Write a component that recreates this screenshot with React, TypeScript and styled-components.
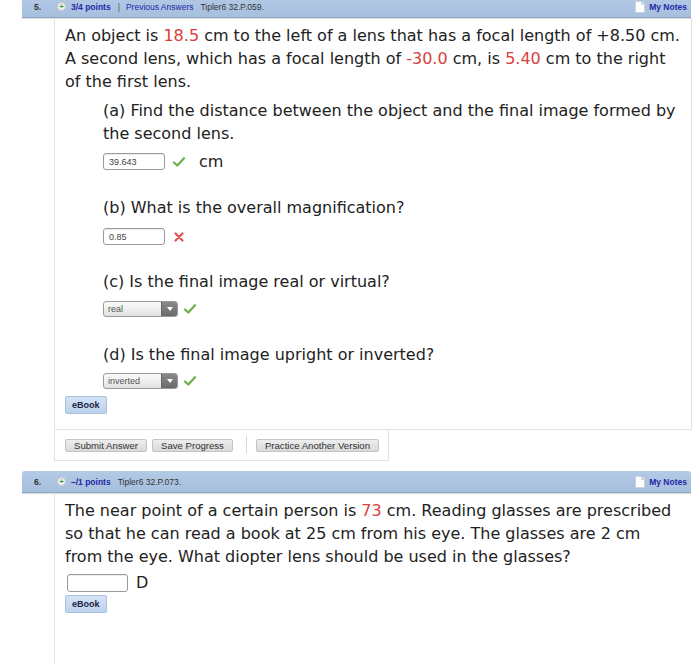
import { createGlobalStyle } from "styled-components";
import styled from "styled-components";

const GlobalStyle = createGlobalStyle`
    body
    {
        margin: 0;
        background: #ffffff;
        font-family: "DejaVu Sans", Verdana, sans-serif;
    }
`;

const Page = styled.div`
    width: 700px;
    margin-top: -4px;
`;

const Header = styled.div`
    display: flex;
    align-items: center;
    height: 21px;
    margin: 0 9px 0 22px;
    padding: 0 4px 0 12px;

    font-family: "Liberation Sans", Arial, sans-serif;
    font-size: 8.5px;
    color: #333333;

    background: linear-gradient(#b3cae6, #a6bfdd);
    border-bottom: 1px solid #8ea7c7;
    border-radius: 3px 3px 0 0;
    box-shadow: 0 1px 1px rgba(0, 0, 0, 0.15);
`;

const Number = styled.span`
    width: 23px;
    font-weight: 700;
`;

const PlusIcon = styled.span`
    display: inline-flex;
    align-items: center;
    justify-content: center;
    width: 7px;
    height: 7px;
    margin-right: 5px;

    border-radius: 50%;
    background: #f2f2f2;
    border: 1px solid #c8c8c8;
    color: #3aa03a;
    font-size: 8px;
    font-weight: 700;
    line-height: 7px;
`;

const Points = styled.span`
    color: #2626a8;
    font-weight: 700;
    margin-right: 7px;
`;

const Link = styled.span`
    color: #2626a8;
    margin-right: 7px;
`;

const Pipe = styled.span`
    color: #555555;
    margin-right: 6px;
`;

const NotesLink = styled.span`
    display: flex;
    align-items: center;
    gap: 4px;
    margin-left: auto;

    color: #2626a8;
    font-weight: 700;
`;

const Body = styled.div<{ framed? : boolean }>`
    margin-left: 54px;
    margin-right: ${props => props.framed ? "8px" : "0"};
    padding: 6px 10px 0 10px;

    border-left: 1px solid #e2e2e2;
    border-right: ${props => props.framed ? "1px solid #e2e2e2" : "none"};
    border-bottom: ${props => props.framed ? "1px solid #e2e2e2" : "none"};
`;

const Text = styled.p`
    margin: 0;
    font-size: 16px;
    line-height: 23px;
    color: #222222;
`;

const Red = styled.span`
    color: #d8413c;
`;

const Part = styled.div`
    margin-left: 38px;
`;

const AnswerRow = styled.div<{ top : number, bottom : number }>`
    display: flex;
    align-items: center;
    margin-top: ${props => props.top}px;
    margin-bottom: ${props => props.bottom}px;
`;

const Input = styled.div<{ w : number, h : number }>`
    box-sizing: border-box;
    width: ${props => props.w}px;
    height: ${props => props.h}px;
    padding: 0 5px;
    display: flex;
    align-items: center;

    border: 1px solid #9a9a9a;
    border-radius: 3px;
    background: #ffffff;
    box-shadow: inset 0 1px 1px rgba(0, 0, 0, 0.08);

    font-family: "Liberation Sans", Arial, sans-serif;
    font-size: 9px;
    color: #444444;
`;

const Select = styled.div`
    box-sizing: border-box;
    display: flex;
    width: 75px;
    height: 16px;

    border: 1px solid #9a9a9a;
    border-radius: 3px;
    overflow: hidden;
    background: linear-gradient(#fbfbfb, #e2e2e2);

    font-family: "Liberation Sans", Arial, sans-serif;
    font-size: 9px;
    color: #555555;
`;

const SelectText = styled.span`
    flex: 1;
    padding-left: 4px;
    line-height: 14px;
`;

const SelectArrow = styled.span`
    display: flex;
    align-items: center;
    justify-content: center;
    width: 15px;
    background: linear-gradient(#8a8a8a, #6a6a6a);
    border-left: 1px solid #666666;
`;

const Mark = styled.span<{ gap : number }>`
    display: flex;
    margin-left: ${props => props.gap}px;
`;

const Unit = styled.span<{ gap : number }>`
    margin-left: ${props => props.gap}px;
    font-size: 16px;
    color: #222222;
`;

const EBook = styled.div<{ top : number }>`
    display: inline-block;
    margin-top: ${props => props.top}px;
    padding: 0 6px;
    height: 16px;
    line-height: 16px;

    font-family: "Liberation Sans", Arial, sans-serif;
    font-size: 9px;
    font-weight: 700;
    color: #222244;

    background: linear-gradient(#d4e3f5, #bcd2ee);
    border: 1px solid #a9c0de;
    border-radius: 2px;
`;

const ActionBar = styled.div`
    display: inline-flex;
    align-items: center;
    margin-left: 54px;
    padding: 6px 9px 6px 10px;

    border-left: 1px solid #e2e2e2;
    border-right: 1px solid #e2e2e2;
    border-bottom: 1px solid #e2e2e2;
`;

const Button = styled.div<{ gap? : number }>`
    height: 11px;
    margin-left: ${props => props.gap ?? 0}px;
    padding: 0 8px;
    line-height: 11px;

    font-family: "Liberation Sans", Arial, sans-serif;
    font-size: 9.6px;
    color: #333333;

    background: linear-gradient(#eeeeee, #d9d9d9);
    border: 1px solid #c4c4c4;
    border-radius: 2px;
`;

const Separator = styled.span`
    width: 1px;
    height: 18px;
    margin: 0 9px 0 13px;
    background: #d8d8d8;
`;

const Spacer = styled.div<{ h : number }>`
    height: ${props => props.h}px;
`;

function Check()
{
    return (
        <svg width="12" height="10" viewBox="0 0 12 10">
            <path d="M1 5.5 L4.3 8.5 L11 1.2" fill="none" stroke="#6ab04c" strokeWidth="2.2" strokeLinecap="round" strokeLinejoin="round"/>
        </svg>
    );
}

function Cross()
{
    return (
        <svg width="10" height="10" viewBox="0 0 10 10">
            <path d="M1.5 1.5 L8.5 8.5 M8.5 1.5 L1.5 8.5" stroke="#e05454" strokeWidth="2.2" strokeLinecap="round"/>
        </svg>
    );
}

function NoteIcon()
{
    return (
        <svg width="10" height="12" viewBox="0 0 10 12">
            <path d="M0.5 0.5 H6.5 L9.5 3.5 V11.5 H0.5 Z" fill="#ffffff" stroke="#c8d2de"/>
            <path d="M6.5 0.5 V3.5 H9.5" fill="#e8edf3" stroke="#c8d2de"/>
        </svg>
    );
}

function Arrow()
{
    return (
        <svg width="6" height="4" viewBox="0 0 6 4">
            <path d="M0 0 H6 L3 4 Z" fill="#ffffff"/>
        </svg>
    );
}

export default function App()
{
    return (
        <Page>
            <GlobalStyle/>

            <Header>
                <Number>5.</Number>
                <PlusIcon>+</PlusIcon>
                <Points>3/4 points</Points>
                <Pipe>|</Pipe>
                <Link>Previous Answers</Link>
                <span>Tipler6 32.P.059.</span>
                <NotesLink><NoteIcon/>My Notes</NotesLink>
            </Header>

            <Body framed>
                <Text>
                    An object is <Red>18.5</Red> cm to the left of a lens that has a focal length of +8.50 cm.<br/>
                    A second lens, which has a focal length of <Red>-30.0</Red> cm, is <Red>5.40</Red> cm to the right<br/>
                    of the first lens.
                </Text>

                <Part>
                    <Spacer h={6}/>
                    <Text>(a) Find the distance between the object and the final image formed by<br/>the second lens.</Text>
                    <AnswerRow top={7} bottom={25}>
                        <Input w={62} h={17}>39.643</Input>
                        <Mark gap={8}><Check/></Mark>
                        <Unit gap={14}>cm</Unit>
                    </AnswerRow>

                    <Text>(b) What is the overall magnification?</Text>
                    <AnswerRow top={9} bottom={25}>
                        <Input w={62} h={17}>0.85</Input>
                        <Mark gap={9}><Cross/></Mark>
                    </AnswerRow>

                    <Text>(c) Is the final image real or virtual?</Text>
                    <AnswerRow top={8} bottom={26}>
                        <Select>
                            <SelectText>real</SelectText>
                            <SelectArrow><Arrow/></SelectArrow>
                        </Select>
                        <Mark gap={6}><Check/></Mark>
                    </AnswerRow>

                    <Text>(d) Is the final image upright or inverted?</Text>
                    <AnswerRow top={7} bottom={0}>
                        <Select>
                            <SelectText>inverted</SelectText>
                            <SelectArrow><Arrow/></SelectArrow>
                        </Select>
                        <Mark gap={6}><Check/></Mark>
                    </AnswerRow>
                </Part>

                <EBook top={7}>eBook</EBook>
                <Spacer h={15}/>
            </Body>

            <ActionBar>
                <Button>Submit Answer</Button>
                <Button gap={5}>Save Progress</Button>
                <Separator/>
                <Button>Practice Another Version</Button>
            </ActionBar>

            <Spacer h={10}/>

            <Header>
                <Number>6.</Number>
                <PlusIcon>+</PlusIcon>
                <Points>–/1 points</Points>
                <span>Tipler6 32.P.073.</span>
                <NotesLink><NoteIcon/>My Notes</NotesLink>
            </Header>

            <Body>
                <Text>
                    The near point of a certain person is <Red>73</Red> cm. Reading glasses are prescribed<br/>
                    so that he can read a book at 25 cm from his eye. The glasses are 2 cm<br/>
                    from the eye. What diopter lens should be used in the glasses?
                </Text>
                <AnswerRow top={5} bottom={0}>
                    <Input w={61} h={18} style={{ marginLeft: 2 }}/>
                    <Unit gap={8}>D</Unit>
                </AnswerRow>
                <EBook top={2}>eBook</EBook>
                <Spacer h={60}/>
            </Body>
        </Page>
    );
}
